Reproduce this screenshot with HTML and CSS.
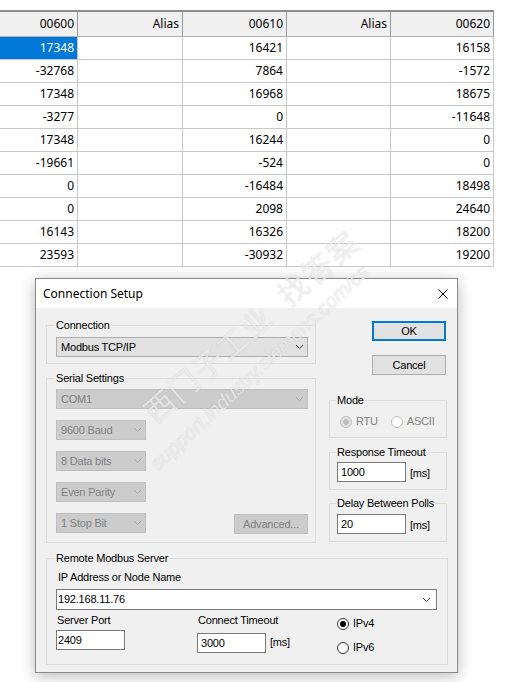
FILE: index.html
```html
<!DOCTYPE html>
<html>
<head>
<meta charset="utf-8">
<link rel="stylesheet" href="styles.css">
</head>
<body>
<div class="sheet">
  <div class="grid">
    <div class="h">00600</div><div class="h">Alias</div><div class="h">00610</div><div class="h">Alias</div><div class="h">00620</div>
    <div class="c sel">17348</div><div class="c"></div><div class="c">16421</div><div class="c"></div><div class="c">16158</div>
    <div class="c">-32768</div><div class="c"></div><div class="c">7864</div><div class="c"></div><div class="c">-1572</div>
    <div class="c">17348</div><div class="c"></div><div class="c">16968</div><div class="c"></div><div class="c">18675</div>
    <div class="c">-3277</div><div class="c"></div><div class="c">0</div><div class="c"></div><div class="c">-11648</div>
    <div class="c">17348</div><div class="c"></div><div class="c">16244</div><div class="c"></div><div class="c">0</div>
    <div class="c">-19661</div><div class="c"></div><div class="c">-524</div><div class="c"></div><div class="c">0</div>
    <div class="c">0</div><div class="c"></div><div class="c">-16484</div><div class="c"></div><div class="c">18498</div>
    <div class="c">0</div><div class="c"></div><div class="c">2098</div><div class="c"></div><div class="c">24640</div>
    <div class="c">16143</div><div class="c"></div><div class="c">16326</div><div class="c"></div><div class="c">18200</div>
    <div class="c">23593</div><div class="c"></div><div class="c">-30932</div><div class="c"></div><div class="c">19200</div>
  </div>
</div>

<div class="dialog">
  <div class="titlebar">
    <span class="title">Connection Setup</span>
    <svg class="close" width="10" height="10" viewBox="0 0 10 10"><path d="M0.5 0.5L9.5 9.5M9.5 0.5L0.5 9.5" stroke="#000" stroke-width="1" fill="none"/></svg>
  </div>
  <div class="dbody">
    <div class="top">
      <div class="col">
        <fieldset class="conn">
          <legend>Connection</legend>
          <div class="combo"><span>Modbus TCP/IP</span><svg class="chev" width="7" height="4" viewBox="0 0 7 4"><path d="M0 0L3.5 3.5L7 0" stroke="#333" fill="none"/></svg></div>
        </fieldset>
        <fieldset class="serial">
          <legend>Serial Settings</legend>
          <div class="combo dis"><span>COM1</span><svg class="chev" width="7" height="4" viewBox="0 0 7 4"><path d="M0 0L3.5 3.5L7 0" stroke="#a8a8a8" fill="none"/></svg></div>
          <div class="combo dis small"><span>9600 Baud</span><svg class="chev" width="7" height="4" viewBox="0 0 7 4"><path d="M0 0L3.5 3.5L7 0" stroke="#a8a8a8" fill="none"/></svg></div>
          <div class="combo dis small"><span>8 Data bits</span><svg class="chev" width="7" height="4" viewBox="0 0 7 4"><path d="M0 0L3.5 3.5L7 0" stroke="#a8a8a8" fill="none"/></svg></div>
          <div class="combo dis small"><span>Even Parity</span><svg class="chev" width="7" height="4" viewBox="0 0 7 4"><path d="M0 0L3.5 3.5L7 0" stroke="#a8a8a8" fill="none"/></svg></div>
          <div class="lastrow">
            <div class="combo dis small nomargin"><span>1 Stop Bit</span><svg class="chev" width="7" height="4" viewBox="0 0 7 4"><path d="M0 0L3.5 3.5L7 0" stroke="#a8a8a8" fill="none"/></svg></div>
            <div class="btn dis adv">Advanced...</div>
          </div>
        </fieldset>
      </div>
      <div class="col">
        <div class="btn ok">OK</div>
        <div class="btn cancel">Cancel</div>
        <fieldset class="mode">
          <legend>Mode</legend>
          <div class="radios">
            <span class="radio dis checked"><i></i>RTU</span>
            <span class="radio dis"><i></i>ASCII</span>
          </div>
        </fieldset>
        <fieldset class="resp">
          <legend>Response Timeout</legend>
          <div class="inrow"><div class="input">1000</div><span class="unit">[ms]</span></div>
        </fieldset>
        <fieldset class="delay">
          <legend>Delay Between Polls</legend>
          <div class="inrow"><div class="input">20</div><span class="unit">[ms]</span></div>
        </fieldset>
      </div>
    </div>
    <fieldset class="remote">
      <legend>Remote Modbus Server</legend>
      <div class="iplabel">IP Address or Node Name</div>
      <div class="combo white"><span>192.168.11.76</span><svg class="chev" width="7" height="4" viewBox="0 0 7 4"><path d="M0 0L3.5 3.5L7 0" stroke="#333" fill="none"/></svg></div>
      <div class="bottomrow">
        <div class="fcol">
          <div class="lbl">Server Port</div>
          <div class="input port">2409</div>
        </div>
        <div class="fcol">
          <div class="lbl">Connect Timeout</div>
          <div class="inrow"><div class="input">3000</div><span class="unit">[ms]</span></div>
        </div>
        <div class="rcol">
          <span class="radio on checked"><i></i>IPv4</span>
          <span class="radio on"><i></i>IPv6</span>
        </div>
      </div>
    </fieldset>
  </div>
</div>

<div class="watermark">
  <div class="wm1">西门子工业&nbsp;&nbsp;找答案</div>
  <div class="wm2">support.industry.siemens.com/cs</div>
</div>
</body>
</html>
```

FILE: styles.css
```css
html, body {
  margin: 0;
  padding: 0;
}
body {
  width: 521px;
  height: 682px;
  position: relative;
  overflow: hidden;
  background: #fff;
  color: #000;
}

/* ---------- grid ---------- */
.sheet {
  padding-top: 10px;
}
.grid {
  display: grid;
  grid-template-columns: 78px 105px 104px 104px 103px;
  width: 494px;
  border-top: 2px solid #8e8e8e;
  font-family: "Noto Sans", "Open Sans", sans-serif;
  font-size: 12px;
}
.h {
  box-sizing: border-box;
  height: 25px;
  line-height: 24px;
  background: #f0f0f0;
  border-right: 1px solid #999;
  border-bottom: 1px solid #b4b4b4;
  text-align: right;
  padding-right: 3px;
}
.c {
  box-sizing: border-box;
  height: 23px;
  line-height: 22px;
  border-right: 1px solid #c8c8c8;
  border-bottom: 1px solid #c8c8c8;
  text-align: right;
  padding-right: 3px;
}
.c.sel {
  background: #0078d7;
  color: #fff;
}

/* ---------- dialog ---------- */
.dialog {
  position: absolute;
  left: 35px;
  top: 278px;
  width: 423px;
  height: 395px;
  box-sizing: border-box;
  border: 1px solid #8a8a8a;
  background: #f0f0f0;
  box-shadow: 0 3px 14px rgba(0, 0, 0, 0.28);
  font-family: "Liberation Sans", Arial, sans-serif;
  font-size: 11px;
  line-height: 13px;
  letter-spacing: -0.2px;
}
.titlebar {
  height: 29px;
  background: #fff;
  display: flex;
  align-items: center;
  justify-content: space-between;
  padding: 0 9px 0 7px;
  letter-spacing: 0;
}
.title {
  font-family: "Noto Sans", "Open Sans", sans-serif;
  font-size: 12px;
  color: #000;
}
.close {
  display: block;
}
.dbody {
  padding: 11px 9px 0 10px;
}
.top {
  display: grid;
  grid-template-columns: 270px 118px;
  column-gap: 13px;
  align-items: start;
}
.col {
  display: flex;
  flex-direction: column;
}

fieldset {
  margin: 0;
  min-width: 0;
  border: 1px solid #dcdcdc;
}
legend {
  padding: 0 1px;
  margin-left: -1px;
  line-height: 13px;
}

.conn {
  padding: 5px 7px 6px 9px;
}
.serial {
  margin-top: 8px;
  padding: 4px 7px 8px 9px;
}

.combo {
  box-sizing: border-box;
  height: 20px;
  border: 1px solid #adadad;
  background: #e1e1e1;
  display: flex;
  align-items: center;
  justify-content: space-between;
  padding: 0 4px 0 4px;
  white-space: nowrap;
}
.combo .chev {
  flex: none;
}
.combo.dis {
  background: #cccccc;
  border-color: #bfbfbf;
  color: #808080;
}
.combo.small {
  width: 90px;
  margin-top: 11px;
}
.combo.small.nomargin {
  margin-top: 0;
}
.lastrow {
  margin-top: 11px;
  display: flex;
  justify-content: space-between;
  align-items: flex-start;
}

.btn {
  box-sizing: border-box;
  height: 20px;
  border: 1px solid #adadad;
  background: #e1e1e1;
  display: flex;
  align-items: center;
  justify-content: center;
}
.btn.dis {
  background: #cccccc;
  border-color: #bfbfbf;
  color: #808080;
}
.adv {
  width: 74px;
  margin-top: 1px;
}
.ok {
  margin-top: 2px;
  margin-left: 43px;
  width: 74px;
  border: 2px solid #0078d7;
}
.cancel {
  margin-top: 14px;
  margin-left: 43px;
  width: 74px;
}

.mode {
  margin-top: 19px;
  padding: 8px 7px 9px 7px;
}
.radios {
  display: flex;
  gap: 13px;
  padding-left: 3px;
}
.radio {
  display: flex;
  align-items: center;
  height: 13px;
  white-space: nowrap;
}
.radio i {
  box-sizing: border-box;
  width: 12px;
  height: 12px;
  border-radius: 50%;
  border: 1px solid #333;
  background: #fff;
  margin-right: 4px;
  position: relative;
  flex: none;
}
.radio.checked i::after {
  content: "";
  position: absolute;
  left: 2px;
  top: 2px;
  width: 6px;
  height: 6px;
  border-radius: 50%;
  background: #000;
}
.radio.dis {
  color: #808080;
}
.radio.dis i {
  border-color: #bcbcbc;
  background: #fff;
}
.radio.dis.checked i {
  background: #e6e6e6;
}
.radio.dis.checked i::after {
  background: #bcbcbc;
}

.resp {
  margin-top: 8px;
  padding: 3px 7px 7px 7px;
}
.delay {
  margin-top: 7px;
  padding: 4px 7px 7px 7px;
}
.inrow {
  display: flex;
  align-items: center;
}
.input {
  box-sizing: border-box;
  width: 69px;
  height: 20px;
  border: 1px solid #7a7a7a;
  background: #fff;
  padding-left: 3px;
  display: flex;
  align-items: center;
}
.input.port {
  padding-left: 1px;
}
.unit {
  margin-left: 4px;
  padding-top: 2px;
}

.remote {
  margin-top: 9px;
  padding: 6px 10px 10px 9px;
}
.iplabel {
  padding-left: 2px;
}
.combo.white {
  margin-top: 5px;
  height: 21px;
  background: #fff;
  border-color: #7a7a7a;
  padding-left: 1px;
  padding-right: 6px;
}
.bottomrow {
  margin-top: 4px;
  display: grid;
  grid-template-columns: 141px 140px auto;
}
.fcol .lbl {
  padding-left: 1px;
}
.fcol .input,
.fcol .inrow {
  margin-top: 3px;
}
.rcol {
  display: flex;
  flex-direction: column;
  gap: 11px;
  padding-top: 3px;
}

/* ---------- watermark ---------- */
.watermark {
  position: absolute;
  left: 0;
  top: 0;
  width: 521px;
  height: 682px;
  pointer-events: none;
}
.wm1, .wm2 {
  position: absolute;
  white-space: nowrap;
  transform-origin: 0 0;
  color: rgba(255, 255, 255, 0.7);
  text-shadow: 0 0 1px rgba(0, 0, 0, 0.2);
}
.wm1 {
  left: 136px;
  top: 402px;
  transform: rotate(-41deg);
  font-family: "Noto Sans CJK SC", sans-serif;
  font-size: 30px;
  line-height: 34px;
  letter-spacing: 2px;
}
.wm2 {
  left: 146px;
  top: 458px;
  transform: rotate(-43deg);
  font-family: "Liberation Sans", sans-serif;
  font-style: italic;
  font-size: 20px;
  line-height: 22px;
}
```
